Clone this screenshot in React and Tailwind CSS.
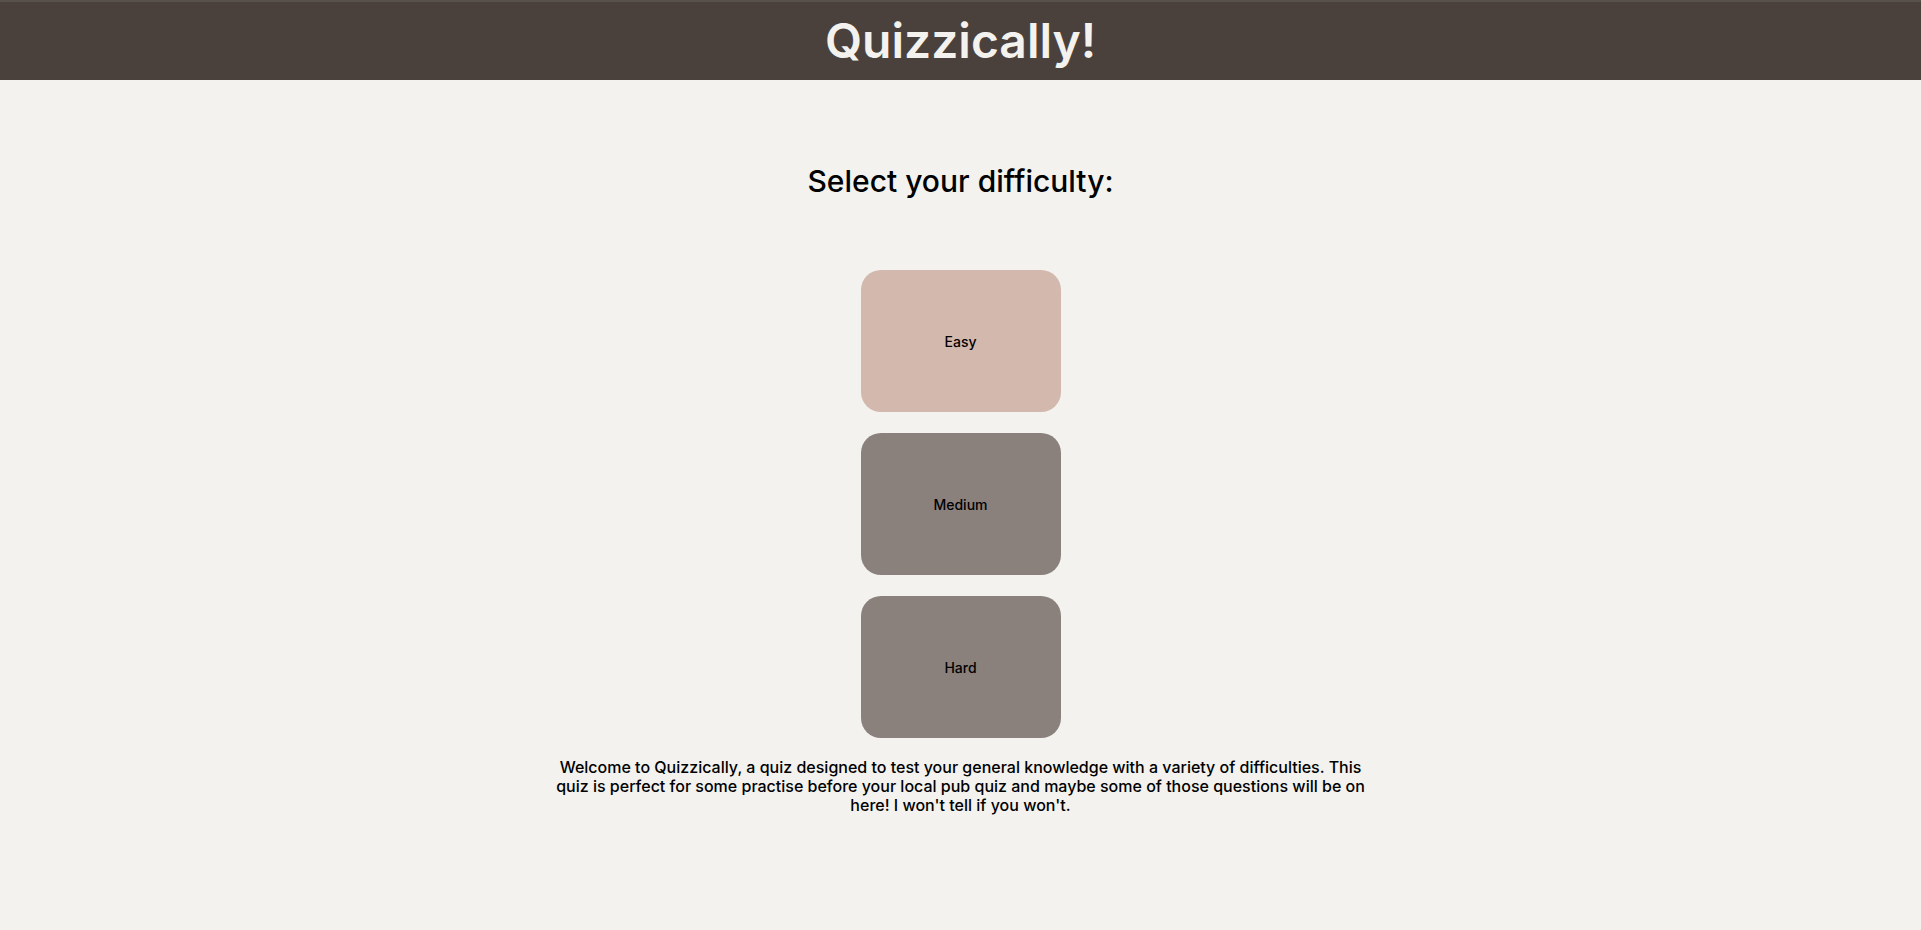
import React from "react";

const levels = [
  { name: "Easy", color: "bg-[#d3b8ad]" },
  { name: "Medium", color: "bg-[#8a817d]" },
  { name: "Hard", color: "bg-[#8a817d]" },
];

const App = () => {
  return (
    <div className="min-h-[930px] bg-[#f3f2ee] font-['Inter',sans-serif] text-black">
      <header className="h-[80px] bg-[#4a413c] border-t-2 border-[#57504b] flex items-center justify-center">
        <h1 className="text-[48px] font-semibold text-[#f3f2ee] leading-none">Quizzically!</h1>
      </header>
      <main className="flex flex-col items-center">
        <h2 className="mt-[84px] text-[30px] font-medium leading-[34px]">Select your difficulty:</h2>
        <div className="mt-[72px] flex flex-col gap-[21px]">
          {levels.map((level) => (
            <button
              key={level.name}
              className={`w-[200px] h-[142px] rounded-[20px] ${level.color} text-[14px] font-medium flex items-center justify-center`}
            >
              {level.name}
            </button>
          ))}
        </div>
        <p className="mt-[20px] max-w-[812px] text-center text-[16px] font-medium leading-[19px]">
          Welcome to Quizzically, a quiz designed to test your general knowledge with a variety of difficulties. This
          quiz is perfect for some practise before your local pub quiz and maybe some of those questions will be on
          here! I won't tell if you won't.
        </p>
      </main>
    </div>
  );
};

export default App;
